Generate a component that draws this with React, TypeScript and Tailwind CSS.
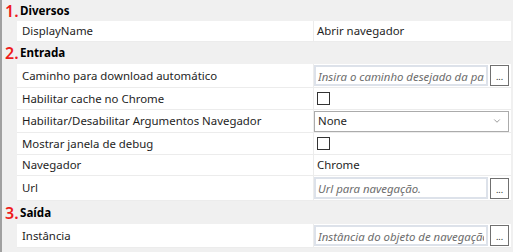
import { ChevronDown } from "lucide-react";

type Row =
  | { kind: "header"; num: string; title: string; h: number }
  | { kind: "text"; label: string; value: string; h: number }
  | { kind: "input"; label: string; placeholder: string; h: number }
  | { kind: "check"; label: string; h: number }
  | { kind: "select"; label: string; value: string; h: number };

const rows: Row[] = [
  { kind: "header", num: "1.", title: "Diversos", h: 21 },
  { kind: "text", label: "DisplayName", value: "Abrir navegador", h: 21 },
  { kind: "header", num: "2.", title: "Entrada", h: 22 },
  { kind: "input", label: "Caminho para download automático", placeholder: "Insira o caminho desejado da pasta", h: 24 },
  { kind: "check", label: "Habilitar cache no Chrome", h: 22 },
  { kind: "select", label: "Habilitar/Desabilitar Argumentos Navegador", value: "None", h: 23 },
  { kind: "check", label: "Mostrar janela de debug", h: 22 },
  { kind: "text", label: "Navegador", value: "Chrome", h: 21 },
  { kind: "input", label: "Url", placeholder: "Url para navegação.", h: 25 },
  { kind: "header", num: "3.", title: "Saída", h: 23 },
  { kind: "input", label: "Instância", placeholder: "Instância do objeto de navegação", h: 24 },
];

function Value({ row }: { row: Row }) {
  if (row.kind === "text") {
    return <span className="pl-[3px] text-[11.4px] text-[#1e1e1e]">{row.value}</span>;
  }
  if (row.kind === "check") {
    return <span className="ml-[3px] block h-[13px] w-[13px] border border-[#333333] bg-white" />;
  }
  if (row.kind === "select") {
    return (
      <div className="flex h-[21px] w-[195px] items-center justify-between border border-[#ababab] bg-white pl-[3px] pr-[6px] text-[11.4px] text-[#1e1e1e]">
        <span>{row.value}</span>
        <ChevronDown className="h-[10px] w-[10px] text-[#606060]" strokeWidth={1.5} />
      </div>
    );
  }
  if (row.kind === "input") {
    return (
      <div className="flex h-full items-center gap-[2px] py-[1px]">
        <div className="h-full w-[174px] overflow-hidden border-2 border-[#dde2ea] bg-white pl-[2px]">
          <span className="block w-[166px] overflow-hidden whitespace-nowrap text-[11.4px] italic leading-[19px] text-[#6d6d6d]">
            {row.placeholder}
          </span>
        </div>
        <button className="flex h-[21px] w-[19px] items-end justify-center border border-[#707070] bg-white pb-[4px] text-[9px] leading-none text-[#1e1e1e]" type="button">
          ...
        </button>
      </div>
    );
  }
  return null;
}

export default function App() {
  return (
    <div className="h-[252px] w-[513px] overflow-hidden border-l-2 border-[#a0a0a0] bg-[#f0f0f0] font-['Noto_Sans','Open_Sans',sans-serif]">
      <div className="w-[509px]">
        {rows.map((row, i) =>
          row.kind === "header" ? (
            <div className="flex items-center bg-[#f0f0f0]" key={i} style={{ height: row.h }}>
              <span className="w-[18px] pl-[3px] text-[16px] font-semibold leading-none text-[#ee1c1c]">{row.num}</span>
              <span className="text-[11.6px] font-bold text-black">{row.title}</span>
            </div>
          ) : (
            <div className="flex pl-[15px]" key={i} style={{ height: row.h }}>
              <div className="flex w-[297px] items-center border-b border-r border-[#ececec] bg-white pl-[5px] text-[11.4px] text-[#1e1e1e]">
                {row.label}
              </div>
              <div className="flex flex-1 items-center border-b border-[#ececec] bg-white">
                <Value row={row} />
              </div>
            </div>
          ),
        )}
      </div>
    </div>
  );
}
